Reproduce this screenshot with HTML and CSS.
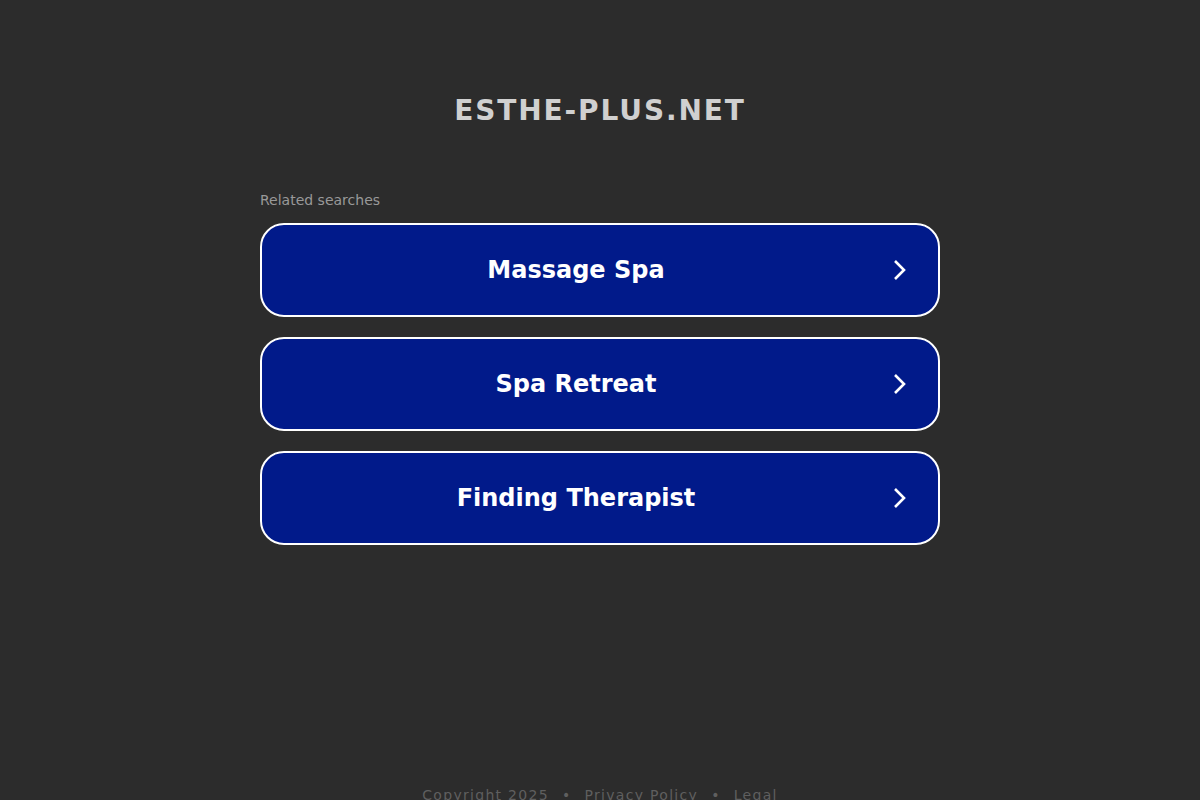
FILE: index.html
```html
<!DOCTYPE html>
<html>
<head>
<meta charset="utf-8">
<link rel="stylesheet" href="styles.css">
</head>
<body>
<div class="page">
  <h1 class="domain">ESTHE-PLUS.NET</h1>
  <div class="related">
    <div class="label">Related searches</div>
    <a class="item" href="#"><span class="text">Massage Spa</span><svg class="arrow" width="16" height="24" viewBox="0 0 16 24"><path d="M3 3 L12 12 L3 21" fill="none" stroke="#fff" stroke-width="2.6"/></svg></a>
    <a class="item" href="#"><span class="text">Spa Retreat</span><svg class="arrow" width="16" height="24" viewBox="0 0 16 24"><path d="M3 3 L12 12 L3 21" fill="none" stroke="#fff" stroke-width="2.6"/></svg></a>
    <a class="item" href="#"><span class="text">Finding Therapist</span><svg class="arrow" width="16" height="24" viewBox="0 0 16 24"><path d="M3 3 L12 12 L3 21" fill="none" stroke="#fff" stroke-width="2.6"/></svg></a>
  </div>
  <div class="footer"><span>Copyright 2025</span><span class="dot">•</span><span>Privacy Policy</span><span class="dot">•</span><span>Legal</span></div>
</div>
</body>
</html>
```
FILE: styles.css
```css
html, body {
  margin: 0;
  padding: 0;
  background: #2c2c2c;
  font-family: "DejaVu Sans", sans-serif;
}
.page {
  height: 800px;
  display: flex;
  flex-direction: column;
  align-items: center;
  position: relative;
  overflow: hidden;
}
.domain {
  margin: 94px 0 0 0;
  font-size: 28px;
  line-height: 34px;
  font-weight: bold;
  letter-spacing: 1.9px;
  color: #d0d0d0;
}
.related {
  width: 680px;
  margin-top: 63px;
}
.label {
  font-size: 14px;
  line-height: 18px;
  color: #999;
  margin-bottom: 14px;
}
.item {
  box-sizing: border-box;
  height: 94px;
  border: 2px solid #fff;
  border-radius: 24px;
  background: #011a8a;
  display: flex;
  align-items: center;
  text-decoration: none;
  margin-bottom: 20px;
  padding: 0 30px;
}
.text {
  flex: 1;
  text-align: center;
  color: #fff;
  font-size: 24px;
  font-weight: bold;
  margin-right: 32px;
}
.arrow {
  display: block;
}
.footer {
  position: absolute;
  top: 787px;
  width: 100%;
  display: flex;
  justify-content: center;
  font-size: 14px;
  letter-spacing: 1.3px;
  color: #5f5f5f;
}
.dot {
  margin: 0 13px;
}
```
